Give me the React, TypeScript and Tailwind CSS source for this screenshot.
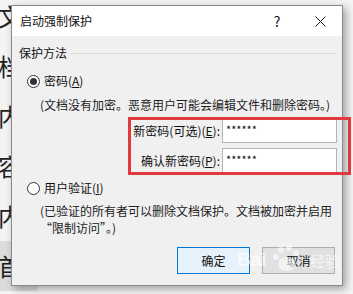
const font = "font-['Microsoft_YaHei_UI','Noto_Sans_CJK_SC',sans-serif]";

function Radio({ checked }: { checked?: boolean }) {
  return (
    <span className="flex h-[13px] w-[13px] items-center justify-center rounded-full border border-[#333] bg-white">
      {checked && <span className="h-[7px] w-[7px] rounded-full bg-[#333]" />}
    </span>
  );
}

export default function App() {
  const docChars = ["文", "档", "内", "容", "内", "首"];

  return (
    <div className={`relative h-[294px] w-[353px] overflow-hidden bg-[#f4f4f4] ${font}`}>
      {/* document behind the dialog */}
      <div className="-ml-[2px] -mt-[9px] flex flex-col text-[24px] leading-[50px] text-[#222]">
        {docChars.map((c, i) => (
          <span key={i} className={i === 5 ? "w-[40px] bg-[#dcdcdc]" : ""}>
            {c}
          </span>
        ))}
      </div>

      {/* dialog */}
      <div className="absolute left-[11px] top-[5px] flex h-[281px] w-[332px] flex-col border border-[#8a8a8a] bg-[#f0f0f0] text-[12px] text-[#111] shadow-[3px_3px_8px_rgba(0,0,0,0.35)]">
        <div className="flex h-[30px] items-center bg-white pl-[8px]">
          <span className="flex-1">启动强制保护</span>
          <span className="w-[12px] text-center text-[14px]">?</span>
          <span className="ml-[29px] mr-[14px] flex w-[16px] justify-center">
            <svg width="11" height="11" viewBox="0 0 11 11">
              <path d="M0.5 0.5 L10.5 10.5 M10.5 0.5 L0.5 10.5" stroke="#222" strokeWidth="1" />
            </svg>
          </span>
        </div>

        <div className="flex flex-col pl-[7px] pr-[5px] pt-[9px]">
          <div className="flex h-[16px] items-center gap-[4px]">
            <span>保护方法</span>
            <span className="h-px flex-1 bg-[#d8d8d8]" />
          </div>

          <div className="mt-[12px] flex h-[16px] items-center gap-[4px] pl-[8px]">
            <Radio checked />
            <span>
              密码(<span className="underline">A</span>)
            </span>
          </div>

          <div className="mt-[8px] h-[16px] pl-[21px] leading-[16px] text-[#222]">
            (文档没有加密。恶意用户可能会编辑文件和删除密码。)
          </div>

          <div className="mt-[6px] flex flex-col gap-[5px]">
            <div className="flex items-center justify-end">
              <span className="mr-[2px]">
                新密码(可选)(<span className="underline">E</span>):
              </span>
              <span className="flex h-[24px] w-[115px] items-start border border-[#b4b4b4] bg-white pl-[3px] pt-[2px] text-[11px] leading-[14px]">
                ******
              </span>
            </div>
            <div className="flex items-center justify-end">
              <span className="mr-[2px]">
                确认新密码(<span className="underline">P</span>):
              </span>
              <span className="flex h-[25px] w-[115px] items-start border border-[#b4b4b4] bg-white pl-[3px] pt-[3px] text-[11px] leading-[14px]">
                ******
              </span>
            </div>
          </div>

          <div className="mt-[7px] flex h-[16px] items-center gap-[4px] pl-[8px]">
            <Radio />
            <span>
              用户验证(<span className="underline">I</span>)
            </span>
          </div>

          <div className="mt-[6px] pl-[21px] leading-[17px] text-[#222]">
            (已验证的所有者可以删除文档保护。文档被加密并启用
            <br />
            “限制访问”。)
          </div>

          <div className="mt-[11px] flex justify-end gap-[12px] pr-[2px]">
            <button className="flex h-[27px] w-[73px] items-center justify-center border border-[#0078d7] bg-[#e5f1fb]">
              确定
            </button>
            <button className="flex h-[27px] w-[73px] items-center justify-center border border-[#adadad] bg-[#e1e1e1]">
              取消
            </button>
          </div>
        </div>
      </div>

      {/* red annotation box */}
      <div className="absolute left-[128px] top-[117px] h-[58px] w-[223px] border-[3px] border-[#e0393e]" />

      {/* watermark */}
      <div className="pointer-events-none absolute left-[237px] top-[250px] font-['Liberation_Sans',sans-serif] text-[19px] font-bold leading-[20px] text-white opacity-70">
        Bai
      </div>
      <svg className="pointer-events-none absolute left-[272px] top-[244px] opacity-60" width="30" height="30" viewBox="0 0 30 30">
        <circle cx="9" cy="6" r="3" fill="#fff" />
        <circle cx="17" cy="4" r="3" fill="#fff" />
        <circle cx="24" cy="9" r="3" fill="#fff" />
        <circle cx="4" cy="13" r="3" fill="#fff" />
        <ellipse cx="15" cy="20" rx="9" ry="7" fill="#fff" />
      </svg>
      <div className="pointer-events-none absolute left-[310px] top-[252px] text-[15px] leading-[18px] text-white opacity-70">
        经验
      </div>
    </div>
  );
}
